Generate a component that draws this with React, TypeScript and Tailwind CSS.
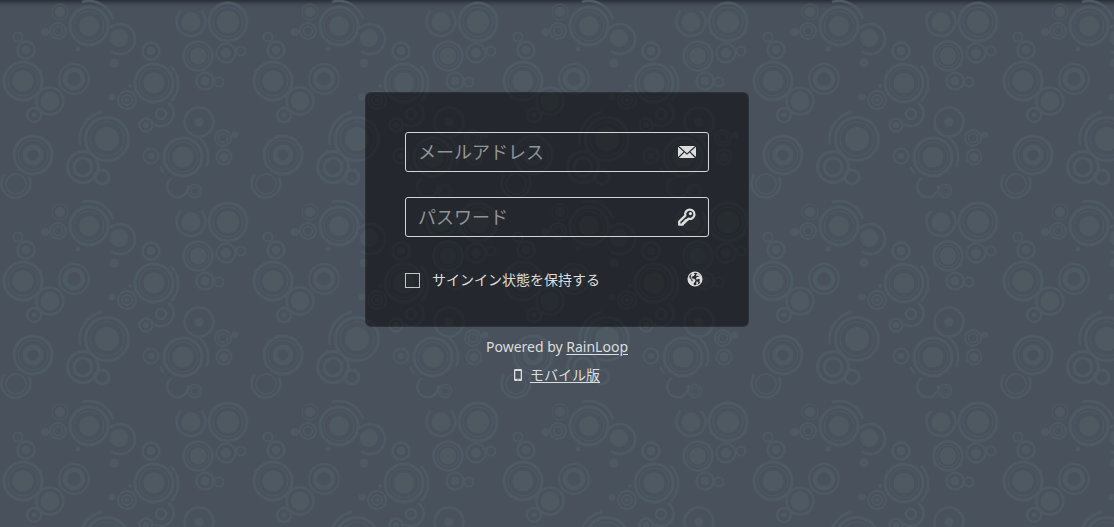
import React, { useState } from "react";

interface Bubble {
  x: number;
  y: number;
  disc?: number;
  rings?: [radius: number, width: number][];
}

const TILE_WIDTH = 250;
const TILE_HEIGHT = 200;

const bubbles: Bubble[] = [
  { x: 60, y: 12, disc: 5, rings: [[8, 1]] },
  { x: 58, y: 31, rings: [[4.5, 1.5], [8, 2]] },
  { x: 45, y: 32, disc: 4 },
  { x: 89, y: 26, disc: 10, rings: [[15, 1], [19, 3]] },
  { x: 114, y: 63, disc: 4.5 },
  { x: 119, y: 38, disc: 9 },
  { x: 18, y: 37, rings: [[4.5, 2]] },
  { x: 26, y: 50, disc: 4, rings: [[8.5, 2.5]] },
  { x: 78, y: 49, disc: 2.5 },
  { x: 23, y: 81, disc: 10.5, rings: [[15, 1], [19, 3]] },
  { x: 74, y: 79, rings: [[9, 4.5], [15, 2]] },
  { x: 50, y: 101, disc: 9.5, rings: [[13.5, 2.5]] },
  { x: 34, y: 115, disc: 2.5, rings: [[7, 2.5]] },
  { x: 151, y: 51, disc: 4, rings: [[8.5, 2.5]] },
  { x: 154, y: 83, disc: 10.5, rings: [[15, 1], [19, 3]] },
  { x: 127, y: 100, disc: 2, rings: [[5, 2], [9, 2]] },
  { x: 112, y: 97, disc: 3.5 },
  { x: 130, y: 86, disc: 2 },
  { x: 161, y: 114, rings: [[5, 2.5]] },
  { x: 146, y: 125, disc: 3, rings: [[6.5, 2.5]] },
  { x: 191, y: 22, disc: 9.5 },
  { x: 228, y: 22, disc: 11, rings: [[15, 1], [19, 3]] },
  { x: 198, y: 56, disc: 8.5, rings: [[11, 1], [14.5, 2.5]] },
  { x: 226, y: 53, disc: 5, rings: [[9.5, 2]] },
  { x: 241, y: 51, rings: [[4.5, 2]] },
  { x: 205, y: 81, disc: 4.5, rings: [[8.5, 2.5]] },
  { x: 219, y: 82, rings: [[4.5, 2]] },
  { x: 107, y: 139, disc: 12, rings: [[17, 1], [21.5, 3]] },
  { x: 83, y: 167, rings: [[9, 3], [15.5, 3]] },
  { x: 102, y: 177, rings: [[7, 3]] },
  { x: 33, y: 155, rings: [[8, 5], [15, 1], [19, 3]] },
  { x: 16, y: 184, rings: [[10, 1.5]] },
  { x: 151, y: 156, disc: 3, rings: [[7.5, 2]] },
  { x: 183, y: 157, disc: 10.5, rings: [[15, 1], [19, 3]] },
  { x: 199, y: 122, disc: 4.5, rings: [[14.5, 2.5]] },
  { x: 223, y: 138, rings: [[4.5, 1.5], [8, 2]] },
  { x: 235, y: 135, disc: 3.5 },
  { x: 224, y: 157, disc: 4.5, rings: [[7.5, 2]] },
  { x: 195, y: 191, rings: [[4, 1], [6.5, 1.5]] },
];

// Open rings: the loose arcs that sit around some of the bubbles
const arcs = [
  "M82 2A25 25 0 0 1 113 19",
  "M111 51A15 15 0 1 0 109 29",
  "M171 66A25 25 0 0 1 171 101",
  "M168 103A12 12 0 1 1 154 124",
  "M181 11A14.5 14.5 0 1 0 201 11",
  "M80 145A28 28 0 0 1 102 112",
  "M4 175A14.5 14.5 0 1 0 29 177",
  "M197 136A25 25 0 0 1 206 167",
  "M172 178A10.5 10.5 0 1 0 188 185",
  "M160 167L164 173",
];

const BubbleTile = () => (
  <>
    {bubbles.map(({ x, y, disc, rings = [] }, index) => (
      <g key={index}>
        {disc && <circle cx={x} cy={y} r={disc} fill="#4e5962" />}
        {rings.map(([radius, width]) => (
          <circle
            key={radius}
            cx={x}
            cy={y}
            r={radius}
            fill="none"
            stroke="#4d5963"
            strokeWidth={width}
          />
        ))}
      </g>
    ))}
    {arcs.map((d) => (
      <path key={d} d={d} fill="none" stroke="#4d5963" strokeWidth={2.5} />
    ))}
  </>
);

const Backdrop = () => (
  <svg className="absolute inset-0 -z-10 h-full w-full" aria-hidden="true">
    <defs>
      <pattern
        id="bubbles"
        width={TILE_WIDTH}
        height={TILE_HEIGHT}
        patternUnits="userSpaceOnUse"
      >
        <BubbleTile />
      </pattern>
    </defs>
    <rect width="100%" height="100%" fill="url(#bubbles)" />
  </svg>
);

const MailIcon = () => (
  <svg className="h-3 w-[18px]" viewBox="0 0 18 12" fill="currentColor" aria-hidden="true">
    <path d="M1 0h16L9 7.2zM0 .8 5.6 5.8 0 11zM18 .8v10.2l-5.6-5.2zM6.4 6.5 9 8.7l2.6-2.2L17 12H1z" />
  </svg>
);

const KeyIcon = () => (
  <svg className="h-[18px] w-[18px]" viewBox="0 0 18 18" aria-hidden="true">
    <path
      d="M7.3 7.6A4.7 4.7 0 1 1 10.3 10.7L9.2 12.2H7.8v1.4H6.3v1.5H4.8v1.6H1.2v-3.2z"
      fill="none"
      stroke="currentColor"
      strokeWidth="2.3"
      strokeLinejoin="round"
    />
    <circle cx="12.4" cy="5.6" r="1.6" fill="currentColor" />
  </svg>
);

const GlobeIcon = () => (
  <svg className="h-4 w-4" viewBox="0 0 16 16" aria-hidden="true">
    <circle cx="8" cy="8" r="6.9" fill="none" stroke="currentColor" strokeWidth="1.3" />
    {/* Oceans are filled, the continents are left open */}
    <path
      d="M8.4 1 6.8 2.2 8 3.4 6.6 5 4.9 5.7 4.5 7.3 7 7.7 8.6 9 7.9 11 6.6 12.3 6.9 14.9C3.4 14.4 1 11.6 1 8L2 5.4 3 7.6l1.3 1 .2 1.7.9.3.3-1.5-2-2.2L4 4.4 5 2.2z"
      fill="currentColor"
    />
    <path
      d="M9.8 1.2 15 6.5l-.2 3-1.4 2.5-1-1.6.5-1.8-1.5-.9-1.5 1-1-1.2 1-1.4 2.2-.4-1.3-1.1-1.5.6-.3-1.4 1.5-1z"
      fill="currentColor"
    />
    <path d="m9.4 10.4 2 .6-.5 2-1.6 1.5z" fill="currentColor" />
  </svg>
);

const PhoneIcon = () => (
  <svg className="h-3 w-2" viewBox="0 0 8 12" aria-hidden="true">
    <path
      d="M1.2 0h5.6Q8 0 8 1.2v9.6Q8 12 6.8 12H1.2Q0 12 0 10.8V1.2Q0 0 1.2 0zM1.3 2v7.8h5.4V2zM3.3 10.4v.9h1.4v-.9z"
      fill="currentColor"
      fillRule="evenodd"
    />
  </svg>
);

interface FieldProps {
  id: string;
  type: string;
  label: string;
  autoComplete: string;
  icon: React.ReactNode;
}

const Field = ({ id, type, label, autoComplete, icon }: FieldProps) => (
  <div className="flex h-10 items-center rounded-[3px] border border-[#d3d6d6] px-3 focus-within:border-white">
    <input
      id={id}
      name={id}
      type={type}
      aria-label={label}
      placeholder={label}
      autoComplete={autoComplete}
      className="h-full min-w-0 flex-1 bg-transparent text-lg text-[#dddddd] outline-none placeholder:text-[#919497]"
    />
    <label htmlFor={id}>{icon}</label>
  </div>
);

export default function App() {
  const [remember, setRemember] = useState(false);

  return (
    <main className="relative isolate flex min-h-screen flex-col items-center bg-[#48515c] px-4 pt-[92px] font-['Noto_Sans','Noto_Sans_CJK_JP',sans-serif] text-[#dddddd] shadow-[inset_0_8px_5px_-6px_rgba(0,0,0,0.5)]">
      <Backdrop />

      <form
        className="flex w-full max-w-96 flex-col gap-[25px] rounded-md bg-black/50 px-10 pt-10 pb-[29px] ring-1 ring-white/5 ring-inset"
        onSubmit={(event) => event.preventDefault()}
      >
        <Field
          id="email"
          type="email"
          label="メールアドレス"
          autoComplete="email"
          icon={<MailIcon />}
        />
        <Field
          id="password"
          type="password"
          label="パスワード"
          autoComplete="current-password"
          icon={<KeyIcon />}
        />

        <div className="flex h-9 items-center justify-between pr-1.5">
          <label className="flex items-center gap-3 text-sm">
            <input
              type="checkbox"
              checked={remember}
              onChange={(event) => setRemember(event.target.checked)}
              className="h-[15px] w-[15px] appearance-none border border-[#c4c7c8] checked:bg-[#dddddd]"
            />
            サインイン状態を保持する
          </label>
          <button type="button" aria-label="言語" className="cursor-pointer pb-0.5">
            <GlobeIcon />
          </button>
        </div>
      </form>

      <footer className="flex flex-col items-center pt-1.5 text-sm leading-7">
        <p>
          Powered by{" "}
          <a href="#rainloop" className="underline underline-offset-2">
            RainLoop
          </a>
        </p>
        <p className="flex items-center gap-2">
          <PhoneIcon />
          <a href="#mobile" className="underline underline-offset-2">
            モバイル版
          </a>
        </p>
      </footer>
    </main>
  );
}
